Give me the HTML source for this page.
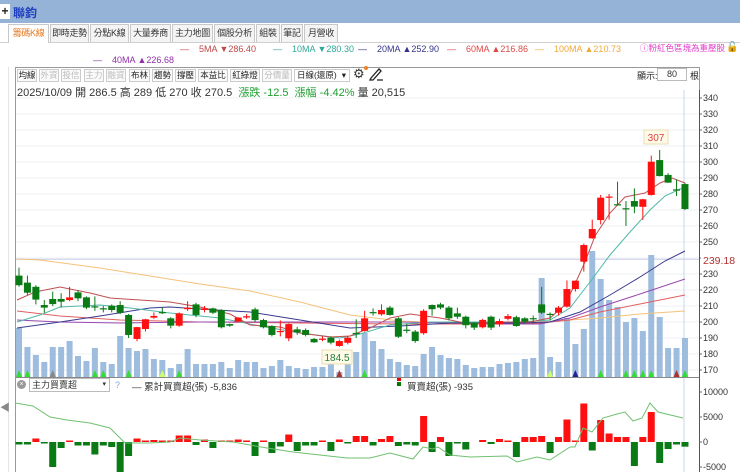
<!DOCTYPE html>
<html><head><meta charset="utf-8">
<style>
*{margin:0;padding:0;box-sizing:border-box}
body{width:740px;height:472px;overflow:hidden;background:#fff;font-family:"Liberation Sans","Noto Sans CJK TC",sans-serif;position:relative;color:#333}
.a{position:absolute;white-space:nowrap}
.tab{position:absolute;top:24px;height:18px;border:1px solid #c8c8c8;border-bottom:none;background:#f4f4f4;font-size:9px;line-height:16px;text-align:center;color:#333;white-space:nowrap;overflow:hidden;letter-spacing:-0.3px}
.btn{position:absolute;top:69px;height:13px;border:1px solid #ccc;font-size:8.5px;line-height:11px;text-align:center;background:#fafafa;color:#222;white-space:nowrap;overflow:hidden}
.dis{color:#bbb}
</style></head><body>
<div class="a" style="left:0;top:0;width:740px;height:23px;background:#95b3d7"></div>
<div class="a" style="left:0;top:4px;width:10px;height:15px;background:#fff;font-size:12px;line-height:15px;text-align:center;font-weight:bold;color:#222">+</div>
<div class="a" style="left:13px;top:4px;font-size:12px;font-weight:bold;color:#1f3fbf">聯鈞</div>
<div class="a" style="left:0;top:42px;width:740px;height:1px;background:#d0d0d0"></div>
<div class="tab" style="left:8px;width:41px;background:#fff;color:#e8781e;height:19px">籌碼K線</div>
<div class="tab" style="left:50px;width:39px">即時走勢</div>
<div class="tab" style="left:90px;width:39px">分點K線</div>
<div class="tab" style="left:130px;width:41px">大量券商</div>
<div class="tab" style="left:172px;width:41px">主力地圖</div>
<div class="tab" style="left:214px;width:41px">個股分析</div>
<div class="tab" style="left:256px;width:24px">組裝</div>
<div class="tab" style="left:281px;width:22px">筆記</div>
<div class="tab" style="left:304px;width:34px">月營收</div>

<div class="a" style="left:180px;top:44px;font-size:9px;color:#c04848">—&nbsp;&nbsp;&nbsp;&nbsp;5MA ▼286.40</div>
<div class="a" style="left:273px;top:44px;font-size:9px;color:#30a898">—&nbsp;&nbsp;&nbsp;&nbsp;10MA ▼280.30</div>
<div class="a" style="left:358px;top:44px;font-size:9px;color:#34348a">—&nbsp;&nbsp;&nbsp;&nbsp;20MA ▲252.90</div>
<div class="a" style="left:447px;top:44px;font-size:9px;color:#e04848">—&nbsp;&nbsp;&nbsp;&nbsp;60MA ▲216.86</div>
<div class="a" style="left:535px;top:44px;font-size:9px;color:#f0a838">—&nbsp;&nbsp;&nbsp;&nbsp;100MA ▲210.73</div>
<div class="a" style="left:640px;top:42px;font-size:8.5px;color:#e040c8">ⓘ粉紅色區塊為重壓股</div>
<div class="a" style="left:726px;top:42px;font-size:10px;color:#000">🔓</div>
<div class="a" style="left:93px;top:55px;font-size:9px;color:#9030a8">—&nbsp;&nbsp;&nbsp;&nbsp;40MA ▲226.68</div>

<div class="a" style="left:8px;top:67px;width:1px;height:405px;background:#e4e4e4"></div>
<div class="a" style="left:15px;top:67px;width:685px;height:405px;border:1px solid #999;border-bottom:none"></div>
<div class="btn" style="left:17px;width:20px">均線</div>
<div class="btn dis" style="left:39px;width:20px">外資</div>
<div class="btn dis" style="left:61px;width:20px">投信</div>
<div class="btn dis" style="left:84px;width:20px">主力</div>
<div class="btn dis" style="left:106px;width:20px">融資</div>
<div class="btn" style="left:129px;width:21px">布林</div>
<div class="btn" style="left:152px;width:21px">趨勢</div>
<div class="btn" style="left:175px;width:21px">撐壓</div>
<div class="btn" style="left:198px;width:30px">本益比</div>
<div class="btn" style="left:230px;width:30px">紅綠燈</div>
<div class="btn dis" style="left:262px;width:30px">分價量</div>
<div class="btn" style="left:294px;width:56px;text-align:left;padding-left:2px;background:#fff">日線(還原) <span style="float:right;padding-right:3px">▾</span></div>
<div class="a" style="left:353px;top:66px;font-size:13px;color:#333">⚙</div>
<div class="a" style="left:364px;top:66px;width:4px;height:4px;background:#f08020;border-radius:2px"></div>
<svg class="a" style="left:368px;top:67px" width="16" height="15"><path d="M3 11 L11 2 L13 4 L5 13 L2 13 Z M9 13 L15 13" fill="none" stroke="#222" stroke-width="1.3"/></svg>
<div class="a" style="left:637px;top:69px;font-size:9px;color:#222">顯示:</div>
<div class="a" style="left:657px;top:68px;width:30px;height:13px;border:1px solid #bbb;font-size:9px;line-height:11px;text-align:center">80</div>
<div class="a" style="left:690px;top:69px;font-size:9px;color:#222">根</div>
<div class="a" style="left:17px;top:84px;font-size:11px;color:#333">2025/10/09 開 286.5 高 289 低 270 收 270.5 &nbsp;<span style="color:#20a030">漲跌 -12.5 &nbsp;漲幅 -4.42%</span> 量 20,515</div>

<div class="a" style="left:17px;top:380px;width:9px;height:9px;border-radius:5px;background:#999;color:#fff;font-size:7px;line-height:9px;text-align:center">×</div>
<div class="a" style="left:29px;top:378px;width:81px;height:14px;border:1px solid #bbb;font-size:9px;line-height:12px;padding-left:2px;color:#333">主力買賣超<span style="float:right;padding-right:3px;font-size:7px">▾</span></div>
<div class="a" style="left:115px;top:380px;font-size:9px;color:#8aa8d8">?</div>
<div class="a" style="left:132px;top:379px;font-size:9.5px;color:#333">— 累計買賣超(張) -5,836</div>
<div class="a" style="left:397px;top:377px;width:4px;height:4px;background:#e00"></div>
<div class="a" style="left:397px;top:382px;width:4px;height:4px;background:#070"></div>
<div class="a" style="left:407px;top:379px;font-size:9.5px;color:#333">買賣超(張) -935</div>
<div class="a" style="left:0;top:399px;font-size:10px;color:#888">◀</div>

<svg id="ch" class="a" style="left:0;top:0" width="740" height="472"></svg>
<script>
var s='';
function Y(p){return 98+(340-p)*1.6;}
function X(i){return 19+i*8.43;}
for(var p=170;p<=340;p+=10){var y=Y(p);s+='<line x1="16" x2="699" y1="'+y+'" y2="'+y+'" stroke="#eef0f4" stroke-width="1"/>';
if(p!=240)s+='<text x="703" y="'+(y+3)+'" font-size="9" fill="#333" font-family="Liberation Sans">'+p+'</text>';s+='<line x1="699" x2="702" y1="'+y+'" y2="'+y+'" stroke="#666"/>';}
s+='<line x1="16" x2="699" y1="259.3" y2="259.3" stroke="#c8cce8" stroke-width="1"/>';
s+='<rect x="701" y="253" width="39" height="13" fill="#fff"/><text x="703" y="264" font-size="10.5" fill="#b03030" font-family="Liberation Sans">239.18</text>';
s+='<line x1="699.5" x2="699.5" y1="90" y2="472" stroke="#555"/>';
s+='<line x1="684" x2="684" y1="90" y2="472" stroke="#c8d4ec"/>';
var V=[328,347,355,362,347,347,341,356,361,348,362,364,336,348,351,349,359,360,368,364,349,364,364,364,362,368,360,362,362,368,366,360,366,368,369,367,367,359,372,364,352,333,341,349,359,362,365,366,354,347,355,358,359,365,368,367,367,364,363,362,359,358,278,357,362,318,344,329,251,279,300,307,322,318,331,255,317,348,348,338];
for(var i=0;i<80;i++){s+='<rect x="'+(X(i)-3)+'" y="'+V[i]+'" width="6" height="'+(377-V[i])+'" fill="#9ebcdd"/>';}
var G={0:'#3d3',1:'#3d3',4:'#888',9:'#3d3',10:'#3d3',13:'#3d3',17:'#cf6',19:'#3d3',38:'#a33',41:'#3d3',63:'#cf6',66:'#229',69:'#3d3',72:'#3d3',73:'#3d3',74:'#3d3',75:'#3d3',78:'#a33',79:'#3d3'};
for(var k in G){var x=X(+k);s+='<path d="M'+(x-3)+' 377 L'+x+' 370 L'+(x+3)+' 377Z" fill="'+G[k]+'"/>';}
function pl(pts,c){s+='<polyline points="'+pts+'" fill="none" stroke="'+c+'" stroke-width="1"/>';}
pl('17,259 40,260 100,268 150,276 200,284 250,291 300,302 350,315 400,321 450,323 500,323 540,322 600,318 640,314 685,311','#f4c27a');
pl('17,311 60,316 120,320 200,322 300,323 400,324 480,324 540,323 570,320 600,312 640,304 685,295','#e06060');
pl('17,320 60,322 120,323 200,322 300,322 400,322 500,324 540,324 570,318 600,307 640,294 685,279','#9a4ab0');
pl('17,328 60,322 100,316 150,308 170,307 200,309 250,312 300,320 350,328 400,326 450,323 520,323 550,322 580,312 610,295 640,277 665,261 685,251','#3a3a90');
pl('17,322 40,315 60,307 100,305 130,308 170,313 220,318 260,326 300,333 340,338 360,334 390,325 430,322 520,322 550,320 570,308 590,282 610,255 630,232 650,210 665,196 680,189 685,188','#50b8a8');
pl('17,300 35,292 60,287 90,293 110,298 140,300 170,302 200,307 230,314 250,325 280,327 300,333 330,337 350,336 370,328 390,318 410,314 440,318 470,324 500,322 530,322 550,318 565,305 575,284 585,262 595,236 610,213 625,197 645,193 660,183 672,178 685,183','#c05050');
var C=[[229,223,234,222],[224.6,218.3,229,217],[222,214,223,211],[210.6,209,213.7,205.8],[214.4,211.2,219,210],[214.4,212.7,218,209],[213.7,215.4,222,213],[218.5,214.8,220,213],[215.4,209,216,208],[209.8,209.4,216,207],[208.6,208.4,210,206],[210.2,207.5,211,206],[210.6,205.8,213,205],[204.4,191.9,205,190],[189.4,196.8,197,188],[195.6,201.7,202,194],[202.7,203.8,206,202],[206.2,206,209,205],[202.3,197.7,203,196],[197.7,205.4,206,197],[208,209,213,207],[211,204.4,212,203],[207.5,208.5,210,206],[208.5,205.8,209,205],[207.5,196.7,208,196],[198.7,197.7,199,197],[200.2,202.8,203,200],[202.8,203.6,205,202],[207.9,201.2,209,200],[201.2,196.7,202,196],[197.5,191.9,198,191],[194,194.4,201,191],[189.8,198.7,199,188],[195.4,193.5,197,192],[195,191.9,196,191],[189.4,187.3,190,187],[189.2,189.6,191,188],[190.2,187.1,191,186],[185,188.1,189,184.5],[187,190.2,191,186],[193.2,192.8,201.7,190],[194.4,202.3,207,194],[206.2,206,208.5,204],[204.8,207.5,211,204],[209,204.4,210,204],[202.3,190.8,203,190],[195.2,194.8,199,193],[194,188.1,195,187],[193,207,208,192],[210.6,208,211,204],[211,209,212,208],[209,202.3,210,201],[205.4,203.3,209,202],[203.3,198,204,196],[199.6,196.5,200,195],[196.7,201.3,202,196],[203.3,196.5,204,195],[198.5,200.6,202,197],[202,203.7,205,201],[203,197.5,204,197],[202.3,200.2,203,199],[202.4,202.2,204,199],[211,205.8,222,205],[205.1,204.9,206,201],[205.8,209,210,204],[209.6,220.6,226,209],[220.6,225.8,226,219],[237.7,248.1,249,231.5],[252.3,258.1,264,252],[263.7,277.7,279.4,261],[278.2,278.4,280,264],[273.6,273.4,287.7,273],[271.1,270.9,275.6,260],[275.6,272.1,283.5,268],[272,276.7,277,263.8],[279.4,300.2,304,279],[301.2,291.2,307.5,291],[291.9,287.1,293,287],[282.9,282.1,289,278.7],[286.2,270.6,287,270]];
for(var i=0;i<80;i++){var c=C[i],x=X(i),up=c[1]>=c[0],col=up?'#ff1010':'#0a7a14';
var t=Y(Math.max(c[0],c[1])),b=Y(Math.min(c[0],c[1])),h=Math.max(b-t,1.2);
s+='<line x1="'+x+'" x2="'+x+'" y1="'+Y(c[2])+'" y2="'+Y(c[3])+'" stroke="'+col+'"/>';
s+='<rect x="'+(x-3.5)+'" y="'+t+'" width="7" height="'+h+'" fill="'+col+'"/>';}
s+='<rect x="644" y="130" width="24" height="14" fill="#fffbe8" stroke="#e8dcb0"/><text x="656" y="141" font-size="10" fill="#e04040" text-anchor="middle" font-family="Liberation Sans">307</text>';
s+='<rect x="322" y="350" width="30" height="14" fill="#fffbe8" stroke="#e8dcb0"/><text x="337" y="361" font-size="10" fill="#208040" text-anchor="middle" font-family="Liberation Sans">184.5</text>';
s+='<line x1="16" x2="699" y1="377.5" y2="377.5" stroke="#888"/>';
var L=[[10000,392],[5000,417],[0,442],[-5000,467]];
L.forEach(function(a){s+='<text x="703" y="'+(a[1]+3)+'" font-size="9" fill="#333" font-family="Liberation Sans">'+a[0]+'</text>';s+='<line x1="699" x2="702" y1="'+a[1]+'" y2="'+a[1]+'" stroke="#666"/>';});
var B=[-500,-500,700,-300,-5000,-1200,300,-700,-700,-2500,-700,-1000,-6500,-2800,700,100,400,100,100,1300,1300,-600,500,-1200,100,100,500,100,-2800,100,-2200,-900,1500,-1800,-700,-700,100,-1800,500,-300,1200,1200,-700,600,1200,-800,-500,-700,5200,-2000,1000,-2800,-300,-1500,0,400,-400,600,200,-3000,1000,1000,1200,-2200,1000,4500,100,7700,-1700,4400,1700,1000,1000,-4800,1000,6000,-4200,-1400,-500,-935];
for(var i=0;i<80;i++){var v=B[i];if(!v)continue;var hh=Math.max(Math.abs(v)/200,1.5);var col=v>0?'#ff1010':'#0a7a14';
s+='<rect x="'+(X(i)-3.5)+'" y="'+(v>0?442-hh:442)+'" width="7" height="'+hh+'" fill="'+col+'"/>';}
pl('15,403 33,406 50,417 67,420 90,423 110,428 117,435 125,443 150,443 170,442 180,438 200,440 233,442 250,445 267,448 293,452 320,455 347,458 370,458 390,453 413,459 423,447 433,449 438,447 450,455 470,457 507,456 517,462 537,457 550,460 570,447 575,447 583,428 592,432 603,418 617,414 625,412 633,421 642,418 650,403 658,412 683,418','#70c070');
document.getElementById('ch').innerHTML=s;
</script>
</body></html>
